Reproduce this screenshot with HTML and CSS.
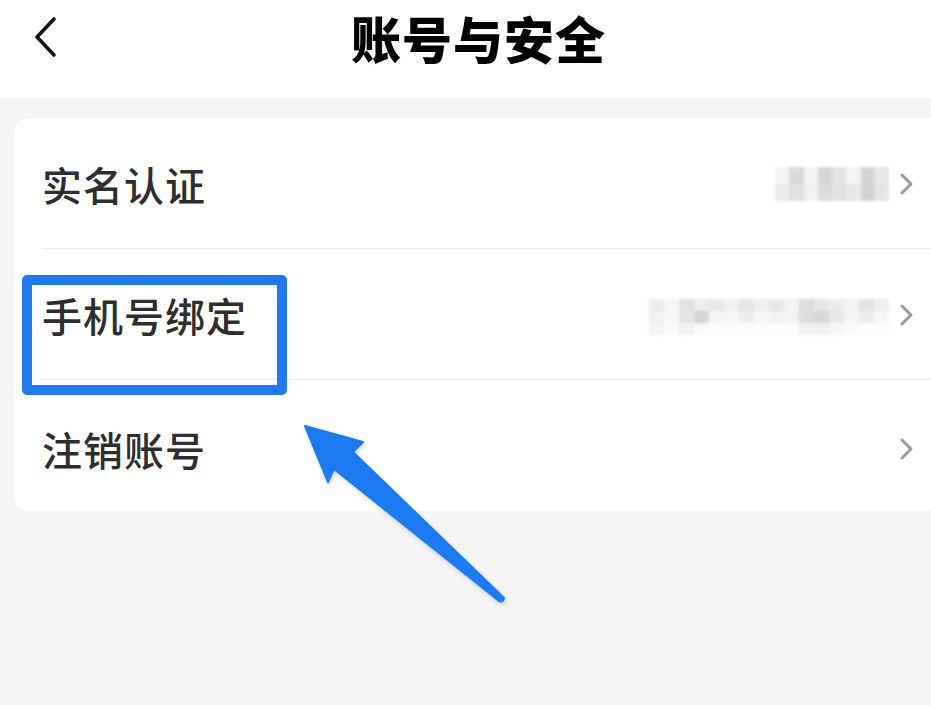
FILE: index.html
```html
<!DOCTYPE html>
<html lang="zh-CN">
<head>
<meta charset="utf-8">
<title>账号与安全</title>
<link rel="stylesheet" href="styles.css">
</head>
<body>
<div class="page">
  <header class="topbar">
    <svg class="back" viewBox="0 0 30 44" width="30" height="44"><path d="M24 4 L7 22 L24 40" fill="none" stroke="#111" stroke-width="3.6" stroke-linecap="round" stroke-linejoin="round"/></svg>
    <h1 class="title">账号与安全</h1>
  </header>
  <main class="content">
    <section class="card">
      <div class="row">
        <span class="label">实名认证</span>
        <span class="value">
          <span class="mosaic m1">
            <i style="background:#f4f4f4"></i><i style="background:#d8d8d8"></i><i style="background:#f2f2f2"></i><i style="background:#d6d6d6"></i><i style="background:#e4e4e4"></i><i style="background:#f4f4f4"></i><i style="background:#d4d4d4"></i><i style="background:#e8e8e8"></i>
            <i style="background:#ececec"></i><i style="background:#e0e0e0"></i><i style="background:#f0f0f0"></i><i style="background:#dadada"></i><i style="background:#e2e2e2"></i><i style="background:#e8e8e8"></i><i style="background:#d2d2d2"></i><i style="background:#e6e6e6"></i>
          </span>
          <svg class="chev" viewBox="0 0 16 24" width="16" height="24"><path d="M3 3 L12 12 L3 21" fill="none" stroke="#9a9a9a" stroke-width="3" stroke-linecap="round" stroke-linejoin="round"/></svg>
        </span>
      </div>
      <div class="row">
        <span class="label">手机号绑定</span>
        <span class="value">
          <span class="mosaic m2">
            <i style="background:#ececec"></i><i style="background:#f6f6f6"></i><i style="background:#e2e2e2"></i><i style="background:#eeeeee"></i><i style="background:#e8e8e8"></i><i style="background:#f0f0f0"></i><i style="background:#e6e6e6"></i><i style="background:#eeeeee"></i><i style="background:#e8e8e8"></i><i style="background:#f2f2f2"></i><i style="background:#dcdcdc"></i><i style="background:#e6e6e6"></i><i style="background:#ededed"></i><i style="background:#f2f2f2"></i><i style="background:#e4e4e4"></i><i style="background:#eeeeee"></i>
            <i style="background:#f0f0f0"></i><i style="background:#f8f8f8"></i><i style="background:#e4e4e4"></i><i style="background:#d4d4d4"></i><i style="background:#f4f4f4"></i><i style="background:#f6f6f6"></i><i style="background:#eeeeee"></i><i style="background:#f6f6f6"></i><i style="background:#f0f0f0"></i><i style="background:#f4f4f4"></i><i style="background:#dcdcdc"></i><i style="background:#d8d8d8"></i><i style="background:#e8e8e8"></i><i style="background:#f4f4f4"></i><i style="background:#ececec"></i><i style="background:#f6f6f6"></i>
            <i style="background:#f4f4f4"></i><i style="background:#fafafa"></i><i style="background:#f2f2f2"></i><i style="background:#fafafa"></i><i style="background:#fcfcfc"></i><i style="background:#fcfcfc"></i><i style="background:#fcfcfc"></i><i style="background:#fcfcfc"></i><i style="background:#fcfcfc"></i><i style="background:#fcfcfc"></i><i style="background:#f2f2f2"></i><i style="background:#f0f0f0"></i><i style="background:#f6f6f6"></i><i style="background:#fafafa"></i><i style="background:#fcfcfc"></i><i style="background:#fcfcfc"></i>
          </span>
          <svg class="chev" viewBox="0 0 16 24" width="16" height="24"><path d="M3 3 L12 12 L3 21" fill="none" stroke="#9a9a9a" stroke-width="3" stroke-linecap="round" stroke-linejoin="round"/></svg>
        </span>
      </div>
      <div class="row">
        <span class="label">注销账号</span>
        <span class="value">
          <svg class="chev" viewBox="0 0 16 24" width="16" height="24"><path d="M3 3 L12 12 L3 21" fill="none" stroke="#9a9a9a" stroke-width="3" stroke-linecap="round" stroke-linejoin="round"/></svg>
        </span>
      </div>
    </section>
  </main>
  <div class="highlight"></div>
  <svg class="pointer" viewBox="0 0 931 705" width="931" height="705">
    <defs>
      <filter id="sh" x="-10%" y="-10%" width="120%" height="120%">
        <feDropShadow dx="1" dy="2" stdDeviation="2" flood-color="#000" flood-opacity="0.18"/>
      </filter>
    </defs>
    <path d="M305 426 L363 442 L353 452 L504 598 Q503 603 499 601 L334 469 L328 482 Z" fill="#1f7af2" stroke="#1f7af2" stroke-width="2" stroke-linejoin="round" filter="url(#sh)"/>
  </svg>
</div>
</body>
</html>
```
FILE: styles.css
```css
* { box-sizing: border-box; margin: 0; padding: 0; }
html, body { width: 931px; height: 705px; overflow: hidden; }
body {
  background: #f5f5f5;
  font-family: "Noto Sans CJK SC", "Noto Sans", sans-serif;
  color: #333;
}
.page { position: relative; width: 931px; height: 705px; }
.topbar {
  height: 98px;
  background: #fff;
  display: flex;
  align-items: center;
  justify-content: center;
  position: relative;
  padding-bottom: 24px;
}
.back {
  position: absolute;
  left: 30px;
  top: 15px;
}
.title {
  font-size: 50px;
  font-weight: 900;
  color: #000;
  letter-spacing: 1px;
  line-height: 1;
  margin-left: 26px;
}
.content { padding: 20px 0 0 14px; }
.card {
  background: #fff;
  border-radius: 16px 0 0 16px;
  padding-left: 28px;
  margin-right: -20px;
}
.row {
  height: 131px;
  display: flex;
  align-items: center;
  justify-content: space-between;
  padding-right: 36px;
  border-bottom: 1.5px solid #ececec;
  padding-top: 2px;
}
.row:last-child { border-bottom: none; padding-top: 6px; }
.label {
  font-size: 40px;
  font-weight: 500;
  color: #2e2e2e;
  letter-spacing: 1px;
  line-height: 1;
}
.value { display: flex; align-items: center; gap: 10px; }
.chev { display: block; }
.mosaic {
  display: grid;
  filter: blur(1.5px);
}
.mosaic i { display: block; }
.m1 {
  grid-template-columns: repeat(8, 14.25px);
  grid-template-rows: repeat(2, 17px);
}
.m2 {
  grid-template-columns: repeat(16, 15px);
  grid-template-rows: repeat(3, 12px);
  margin-top: 4px;
}
.highlight {
  position: absolute;
  left: 22px;
  top: 275px;
  width: 265px;
  height: 120px;
  border: 10px solid #1f7af2;
  border-radius: 5px;
}
.pointer {
  position: absolute;
  left: 0;
  top: 0;
  pointer-events: none;
}
```
